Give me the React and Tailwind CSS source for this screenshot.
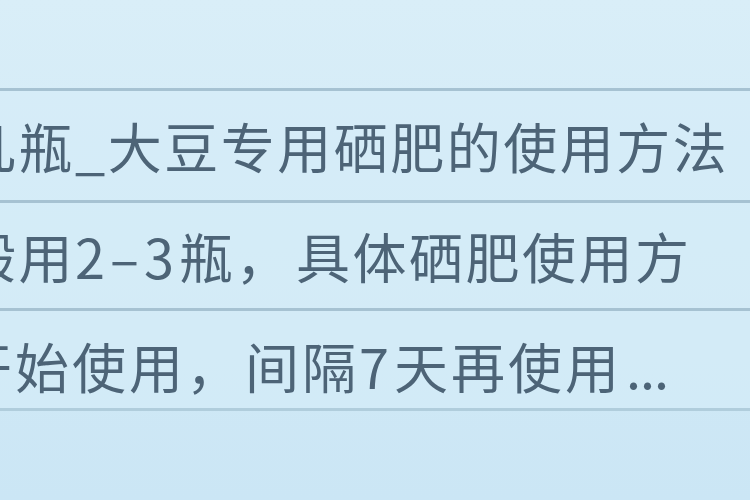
import React from "react";

const Num = ({ children }) => (
  <span className="tracking-[5px]">{children}</span>
);

const rows = [
  {
    content: <>几瓶_大豆专用硒肥的使用方法</>,
    offset: "ml-[-38px] tracking-[2.5px]",
    height: "h-[112px]",
    pad: "pt-[24px]",
  },
  {
    content: (
      <>
        般用<Num>2–3</Num>瓶，<span className="ml-[4px]">具体硒肥使用方</span>
      </>
    ),
    offset: "ml-[-38px] tracking-[2.5px]",
    height: "h-[108px]",
    pad: "pt-[22px]",
  },
  {
    content: (
      <>
        开始使用，<span className="ml-[2px]">间隔<Num>7</Num>天再使用</span>
        <span className="ml-[4px] tracking-[-1px]">...</span>
      </>
    ),
    offset: "ml-[-42px] tracking-[3px]",
    height: "h-[100px]",
    pad: "pt-[24px]",
  },
];

const App = () => {
  return (
    <div
      className="w-[750px] h-[500px] overflow-hidden bg-gradient-to-b from-[#d9eef8] via-[#d2eaf6] to-[#cbe6f5] text-[#4d6477]"
      style={{ fontFamily: '"Noto Sans CJK SC", "Noto Sans", sans-serif' }}
    >
      {/* header space */}
      <div className="h-[88px]" />
      {rows.map((row, index) => (
        <div
          key={index}
          className={`${row.height} ${row.pad} border-t-[3px] border-[#a6c2d2] bg-[#d6edf8]/60 overflow-hidden whitespace-nowrap`}
        >
          <p className={`${row.offset} text-[54px] leading-[62px]`}>
            {row.content}
          </p>
        </div>
      ))}
      <div className="border-t-[3px] border-[#b0cddc]" />
    </div>
  );
};

export default App;
